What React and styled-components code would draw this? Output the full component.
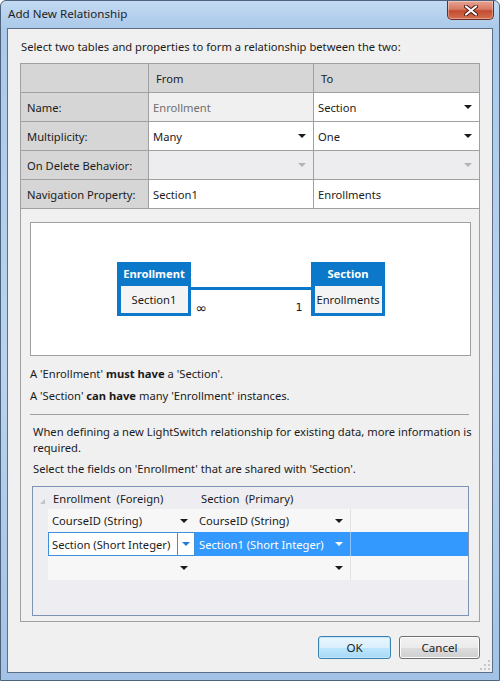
import React from 'react';
import styled, { createGlobalStyle } from 'styled-components';

const GlobalStyle = createGlobalStyle`
  html, body {
    margin: 0;
    padding: 0;
  }
  body {
    font-family: "Noto Sans", "Open Sans", sans-serif;
    font-size: 11.2px;
    color: #1b1b1b;
  }
  * {
    box-sizing: border-box;
  }
`;

const Window = styled.div`
  width: 500px;
  height: 681px;
  display: flex;
  flex-direction: column;
  padding: 0 6px 7px 6px;
  border: 1px solid #4d627c;
  border-radius: 6px 6px 0 0;
  background: linear-gradient(180deg, #c3daf2 0%, #abc9ea 27px, #b9d3ee 55%, #a3c2e5 100%);
`;

const TitleBar = styled.div`
  height: 27px;
  display: flex;
  justify-content: space-between;
  align-items: flex-start;
`;

const Title = styled.div`
  padding: 5px 0 0 1px;
  font-size: 11.6px;
  line-height: 16px;
  color: #1e1e1e;
`;

const CloseButton = styled.div`
  width: 47px;
  height: 19px;
  margin-right: -1px;
  display: flex;
  align-items: center;
  justify-content: center;
  border: 1px solid #6b2a22;
  border-top: none;
  border-radius: 0 0 5px 5px;
  background: linear-gradient(180deg, #e8a394 0%, #d77a64 45%, #c44b30 55%, #d4704f 100%);
  box-shadow: inset 0 0 0 1px rgba(255, 255, 255, 0.35);
`;

const Client = styled.div`
  flex: 1;
  position: relative;
  display: flex;
  flex-direction: column;
  padding: 0 12px;
  background: #f0f0f0;
  border: 1px solid #5d6f86;
`;

const Intro = styled.div`
  margin: 10px 0 8px 1px;
  line-height: 16px;
`;

const Panel = styled.div`
  height: 559px;
  border: 1px solid #a0a0a0;
  display: flex;
  flex-direction: column;
`;

const PropsTable = styled.div`
  display: grid;
  grid-template-columns: 127px 164px 1fr;
  grid-auto-rows: 28px;
  gap: 1px;
  background: #a0a0a0;
  border-bottom: 1px solid #a0a0a0;
`;

const HeadCell = styled.div`
  background: #d6d6d6;
  display: flex;
  align-items: center;
  padding-left: ${p => (p.$label ? '6px' : '7px')};
`;

const ValueCell = styled.div`
  display: flex;
  align-items: center;
  justify-content: space-between;
  padding: 0 7px 0 4px;
  background: ${p => (p.$state === 'disabled' ? '#f0f0f0' : p.$state === 'empty' ? '#ededf0' : '#ffffff')};
  color: ${p => (p.$state === 'disabled' ? '#6f6f6f' : '#1b1b1b')};
`;

const Lower = styled.div`
  flex: 1;
  display: flex;
  flex-direction: column;
  padding: 0 8px 0 9px;
`;

const Diagram = styled.div`
  margin-top: 13px;
  height: 134px;
  border: 1px solid #a0a0a0;
  background: #ffffff;
  display: flex;
  align-items: center;
  justify-content: center;
`;

const Entity = styled.div`
  width: 74px;
  height: 54px;
  padding: 0 3px 3px 4px;
  display: flex;
  flex-direction: column;
  background: #0b78c9;
`;

const EntityTitle = styled.div`
  height: 24px;
  line-height: 24px;
  text-align: center;
  color: #ffffff;
  font-weight: bold;
`;

const EntityBody = styled.div`
  flex: 1;
  background: #f4f4f4;
  text-align: center;
  line-height: 27px;
  white-space: nowrap;
`;

const Connector = styled.div`
  width: 120px;
  height: 54px;
  display: flex;
  flex-direction: column;
`;

const ConnectorLine = styled.div`
  margin-top: 25px;
  height: 4px;
  background: #0b78c9;
`;

const ConnectorLabels = styled.div`
  margin-top: 10px;
  display: flex;
  justify-content: space-between;
  align-items: center;
  padding: 0 8px 0 5px;
  line-height: 16px;
`;

const EndLabel = styled.span`
  font-size: ${p => p.$size || 'inherit'};
  font-family: "DejaVu Sans", sans-serif;
`;

const Statement = styled.div`
  margin-top: ${p => p.$gap};
  line-height: 16px;
`;

const Separator = styled.div`
  margin: 10px 2px 0 0;
  height: 1px;
  background: #a0a0a0;
`;

const Info = styled.div`
  margin-top: ${p => p.$gap};
  margin-right: -8px;
  padding-left: 3px;
  line-height: 16px;
`;

const DataGrid = styled.div`
  margin: 9px 0 0 2px;
  width: 437px;
  height: 130px;
  border: 1px solid #7f93b4;
  background: #eeeef2;
  display: grid;
  grid-template-columns: 15px 147px 155px 1fr;
  grid-template-rows: 22px 23px 24px 24px;
  align-content: start;
`;

const Corner = styled.div`
  display: flex;
  align-items: flex-end;
  justify-content: flex-end;
  padding: 0 3px 5px 0;
`;

const GridHead = styled.div`
  display: flex;
  align-items: center;
  padding-left: ${p => p.$pad};
  white-space: pre;
`;

const RowHead = styled.div``;

const GridCell = styled.div`
  display: flex;
  align-items: center;
  justify-content: space-between;
  padding: 0 7px 0 4px;
  white-space: nowrap;
  background: ${p => (p.$selected ? '#3399ff' : '#f7f7f7')};
  color: ${p => (p.$selected ? '#ffffff' : '#1b1b1b')};
  border-left: ${p => (p.$split ? `1px solid ${p.$selected ? '#8cc4ff' : '#e3e3e3'}` : 'none')};
`;

const EditCell = styled.div`
  display: flex;
  align-items: stretch;
  background: #ffffff;
  border: 1px solid #3d8fe0;
`;

const EditText = styled.div`
  flex: 1;
  display: flex;
  align-items: center;
  padding-left: 3px;
  white-space: nowrap;
`;

const EditButton = styled.div`
  width: 17px;
  display: flex;
  align-items: center;
  justify-content: center;
  border-left: 1px solid #3d8fe0;
`;

const Footer = styled.div`
  margin-top: auto;
  padding-bottom: 13px;
  display: flex;
  justify-content: flex-end;
  gap: 8px;
`;

const DialogButton = styled.button`
  width: ${p => p.$width};
  height: 23px;
  padding: 0;
  font-family: inherit;
  font-size: 11.6px;
  color: #1b1b1b;
  border-radius: 3px;
  border: 1px solid ${p => (p.$primary ? '#3c7fb1' : '#707070')};
  background: ${p =>
    p.$primary
      ? 'linear-gradient(180deg, #eaf6fd 0%, #d9f0fc 50%, #bee6fd 51%, #a7d9f5 100%)'
      : 'linear-gradient(180deg, #f2f2f2 0%, #ebebeb 50%, #dddddd 51%, #cfcfcf 100%)'};
  box-shadow: inset 0 0 0 1px ${p => (p.$primary ? '#bfe6fb' : '#fcfcfc')};
`;

const Grip = styled.svg`
  position: absolute;
  right: 2px;
  bottom: 2px;
`;

const Arrow = ({ color = '#1b1b1b' }) => (
  <svg width="8" height="4" viewBox="0 0 8 4">
    <polygon points="0,0 8,0 4,4" fill={color} />
  </svg>
);

const rows = [
  { label: 'Name:', from: { text: 'Enrollment', state: 'disabled' }, to: { text: 'Section', arrow: true } },
  { label: 'Multiplicity:', from: { text: 'Many', arrow: true }, to: { text: 'One', arrow: true } },
  { label: 'On Delete Behavior:', from: { text: '', state: 'empty', arrow: 'muted' }, to: { text: '', state: 'empty', arrow: 'muted' } },
  { label: 'Navigation Property:', from: { text: 'Section1' }, to: { text: 'Enrollments' } },
];

function Value({ cell }) {
  return (
    <ValueCell $state={cell.state}>
      <span>{cell.text}</span>
      {cell.arrow && <Arrow color={cell.arrow === 'muted' ? '#b4b4b4' : '#1b1b1b'} />}
    </ValueCell>
  );
}

export default function App() {
  return (
    <>
      <GlobalStyle />
      <Window>
        <TitleBar>
          <Title>Add New Relationship</Title>
          <CloseButton>
            <svg width="14" height="11" viewBox="0 0 14 11">
              <path d="M2 1.5 L12 9.5 M12 1.5 L2 9.5" stroke="#4a1a12" strokeWidth="4" strokeLinecap="round" />
              <path d="M2 1.5 L12 9.5 M12 1.5 L2 9.5" stroke="#ffffff" strokeWidth="2.2" strokeLinecap="round" />
            </svg>
          </CloseButton>
        </TitleBar>
        <Client>
          <Intro>Select two tables and properties to form a relationship between the two:</Intro>
          <Panel>
            <PropsTable>
              <HeadCell $label />
              <HeadCell>From</HeadCell>
              <HeadCell>To</HeadCell>
              {rows.map(r => (
                <React.Fragment key={r.label}>
                  <HeadCell $label>{r.label}</HeadCell>
                  <Value cell={r.from} />
                  <Value cell={r.to} />
                </React.Fragment>
              ))}
            </PropsTable>
            <Lower>
              <Diagram>
                <Entity>
                  <EntityTitle>Enrollment</EntityTitle>
                  <EntityBody>Section1</EntityBody>
                </Entity>
                <Connector>
                  <ConnectorLine />
                  <ConnectorLabels>
                    <EndLabel $size="14px">∞</EndLabel>
                    <EndLabel>1</EndLabel>
                  </ConnectorLabels>
                </Connector>
                <Entity>
                  <EntityTitle>Section</EntityTitle>
                  <EntityBody>Enrollments</EntityBody>
                </Entity>
              </Diagram>
              <Statement $gap="10px">A 'Enrollment' <b>must have</b> a 'Section'.</Statement>
              <Statement $gap="6px">A 'Section' <b>can have</b> many 'Enrollment' instances.</Statement>
              <Separator />
              <Info $gap="9px">
                When defining a new LightSwitch relationship for existing data, more information is required.
              </Info>
              <Info $gap="5px">Select the fields on 'Enrollment' that are shared with 'Section'.</Info>
              <DataGrid>
                <Corner>
                  <svg width="5" height="5" viewBox="0 0 5 5">
                    <polygon points="5,0 5,5 0,5" fill="#c4c4c4" />
                  </svg>
                </Corner>
                <GridHead $pad="5px">{'Enrollment  (Foreign)'}</GridHead>
                <GridHead $pad="6px">{'Section  (Primary)'}</GridHead>
                <GridHead $pad="6px" />

                <RowHead />
                <GridCell>
                  <span>CourseID (String)</span>
                  <Arrow />
                </GridCell>
                <GridCell>
                  <span>CourseID (String)</span>
                  <Arrow />
                </GridCell>
                <GridCell $split />

                <RowHead />
                <EditCell>
                  <EditText>Section (Short Integer)</EditText>
                  <EditButton>
                    <Arrow color="#1e7fd6" />
                  </EditButton>
                </EditCell>
                <GridCell $selected>
                  <span>Section1 (Short Integer)</span>
                  <Arrow color="#ffffff" />
                </GridCell>
                <GridCell $selected $split />

                <RowHead />
                <GridCell>
                  <span />
                  <Arrow />
                </GridCell>
                <GridCell>
                  <span />
                  <Arrow />
                </GridCell>
                <GridCell $split />
              </DataGrid>
            </Lower>
          </Panel>
          <Footer>
            <DialogButton $primary $width="73px">OK</DialogButton>
            <DialogButton $width="81px">Cancel</DialogButton>
          </Footer>
          <Grip width="10" height="10" viewBox="0 0 10 10">
            <rect x="8" y="0" width="2" height="2" fill="#c6c6c6" />
            <rect x="4" y="4" width="2" height="2" fill="#c6c6c6" />
            <rect x="8" y="4" width="2" height="2" fill="#c6c6c6" />
            <rect x="0" y="8" width="2" height="2" fill="#c6c6c6" />
            <rect x="4" y="8" width="2" height="2" fill="#c6c6c6" />
            <rect x="8" y="8" width="2" height="2" fill="#c6c6c6" />
          </Grip>
        </Client>
      </Window>
    </>
  );
}
